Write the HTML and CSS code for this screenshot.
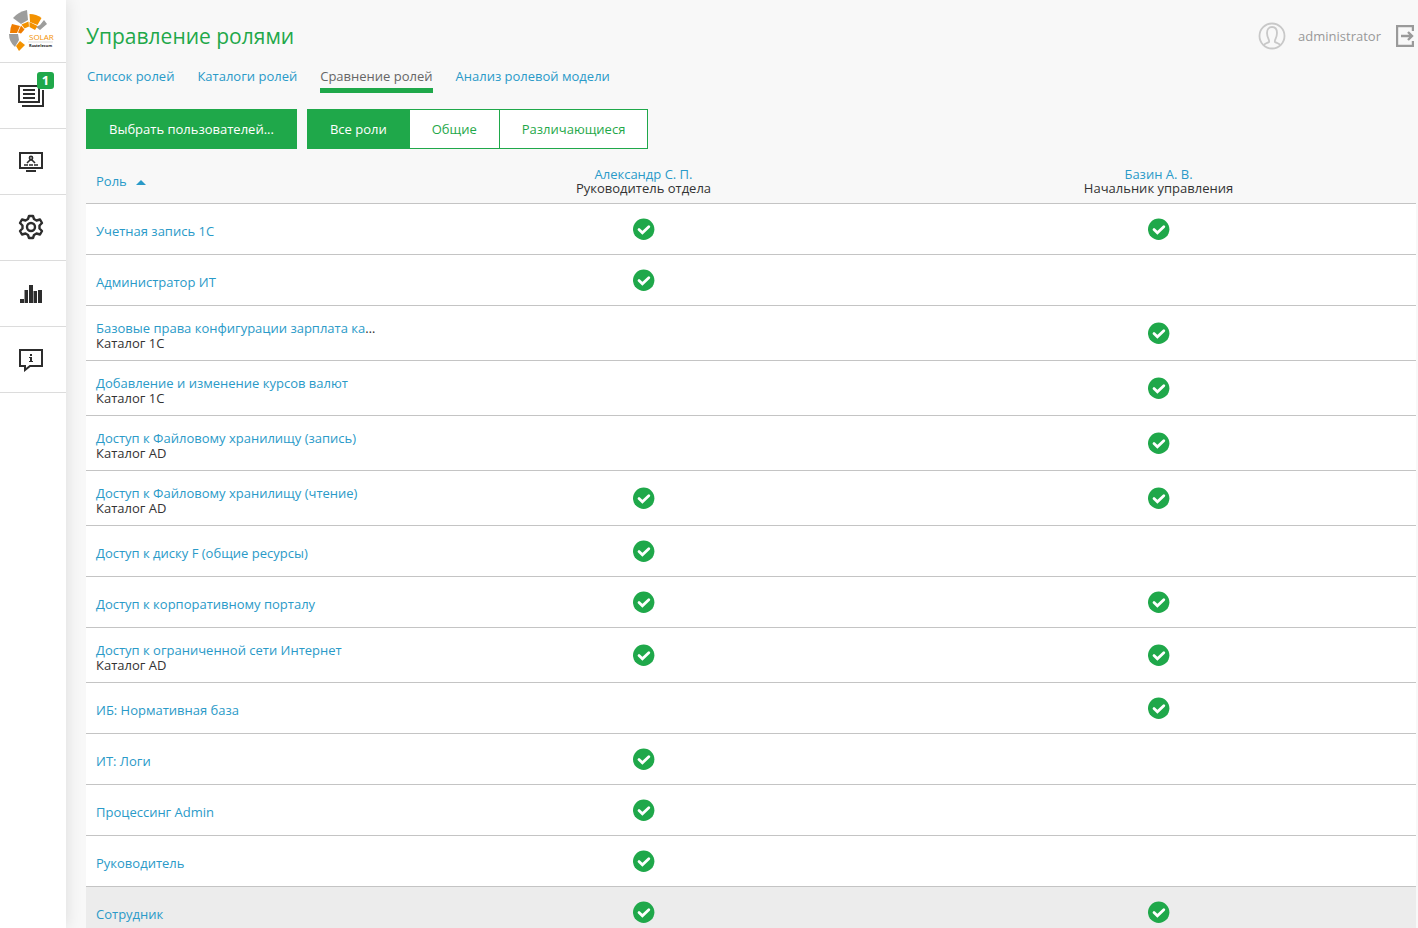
FILE: index.html
```html
<!DOCTYPE html>
<html lang="ru">

<head>
    <meta charset="utf-8">
    <title>Управление ролями</title>
    <meta name="viewport" content="width=device-width,initial-scale=1">
    <link rel="stylesheet" href="styles.css">
</head>

<body>
    <svg class="sprite" aria-hidden="true">
        <symbol id="check" viewBox="0 0 22 22">
            <circle cx="10.7" cy="11.3" r="10.7" fill="#1fa84a" />
            <path d="M6 11.600l3.400 3.200 6.400-6" fill="none" stroke="#fff" stroke-width="2.8" stroke-linecap="round" />
        </symbol>
    </svg>

    <div class="app">
        <nav class="sidebar">
            <a href="#" class="logo" aria-label="Solar Rostelecom">
                <svg viewBox="0 0 66 62" width="66" height="62">
                    <g fill="#9d9d9c">
                        <path d="M13 18q5-6 14-8l1 10-7 4z" />
                        <path d="M40 25l4-5 3 4-7 6-4-3z" />
                        <path d="M9 34h9l1 6-4 7q-6-5-6-13z" />
                    </g>
                    <g fill="#f39200">
                        <path d="M29.5 14q7 0 12 4l-4 7-7.500-3z" />
                        <path d="M21.500 24.500l7-3 .5 5-4.500 2z" />
                        <path d="M29.500 22l8 4-2.500 4-5.500-3z" />
                        <path d="M16 46l4-5 5 4-6 6z" />
                    </g>
                    <g fill="#ef7d00">
                        <path d="M12 24l8 2-3 7h-7q0-5 2-9z" />
                        <path d="M21 25.500l3.500 4-3.500 4-3-1z" />
                    </g>
                    <text x="29" y="40" font-size="8" fill="#f39200">SOLAR</text>
                    <path d="M28 42h25" stroke="#bbb" stroke-width=".5" />
                    <text x="29" y="47" font-size="4" font-weight="700" fill="#222">Rostelecom</text>
                </svg>
            </a>
            <a href="#" class="side-link" aria-label="Заявки">
                <svg viewBox="0 0 26 22" width="26" height="22" fill="none" stroke="#2d2d2d" stroke-width="2">
                    <path d="M1 1h20v16H1zM4 21h21V5M5 5h12M5 9h12M5 13h12" />
                </svg>
                <span class="badge">1</span>
            </a>
            <a href="#" class="side-link" aria-label="Рабочее место">
                <svg viewBox="0 0 26 22" width="26" height="22" fill="none" stroke="#2d2d2d" stroke-width="2">
                    <path d="M2 2h22v15H2zM8 20h10" />
                    <path d="M6 14h4M11 14h4M16 14h4M9 12l3-3h2l3 3" stroke-width="1.6" />
                    <circle cx="13" cy="7" r="1.6" stroke-width="1.6" />
                </svg>
            </a>
            <a href="#" class="side-link gear" aria-label="Настройки">
                <svg viewBox="0 0 26 26" width="26" height="26" fill="none" stroke="#2d2d2d" stroke-width="2.4" stroke-linejoin="round">
                    <path d="M11 2h4l1 3 2.500 1.500 3.500-1 2 3.500-2.500 2.500v3L24 17l-2 3.500-3.500-1L16 21l-1 3h-4l-1-3-2.500-1.500-3.500 1L2 17l2.500-2.500v-3L2 9l2-3.500 3.500 1L10 5z" />
                    <circle cx="13" cy="13" r="4" />
                </svg>
            </a>
            <a href="#" class="side-link" aria-label="Отчеты">
                <svg viewBox="0 0 22 18" width="22" height="18" fill="#2d2d2d">
                    <path d="M0 14h4v4H0zM4.500 5H8v13H4.500zM9 0h4v18H9zM13.500 6H17v12h-3.500zM18 5h4v13h-4z" />
                </svg>
            </a>
            <a href="#" class="side-link" aria-label="Справка">
                <svg viewBox="0 0 26 24" width="26" height="24" fill="none" stroke="#2d2d2d" stroke-width="2">
                    <path d="M2 2h22v16H12l-5 4v-4H2z" />
                    <path d="M12 6h2v2h-2zM11 9h3v4h1v1h-4v-1h1v-3h-1z" fill="#2d2d2d" stroke="none" />
                </svg>
            </a>
        </nav>

        <main class="content">
            <header class="header">
                <h1>Управление ролями</h1>
                <div class="user">
                    <svg viewBox="0 0 28 28" width="28" height="28" fill="none" stroke="#c8c8c8" stroke-width="1.8">
                        <circle cx="14" cy="14" r="12.5" />
                        <path d="M6 23c1-2 4-2 5-3 1-2-2-4-2-9 0-4 2-6 5-6s5 2 5 6c0 5-3 7-2 9 1 1 4 1 5 3" />
                    </svg>
                    <span class="user-name">administrator</span>
                    <a href="#" class="logout" aria-label="Выход">
                        <svg viewBox="0 0 18 22" width="18" height="22" fill="none" stroke="#9a9a9a" stroke-width="2.4">
                            <path d="M17 6V1H1v20h16v-5M5 11h11M12 7l4 4-4 4" />
                        </svg>
                    </a>
                </div>
            </header>

            <nav class="tabs">
                <a href="#">Список ролей</a>
                <a href="#">Каталоги ролей</a>
                <a href="#" class="active">Сравнение ролей</a>
                <a href="#">Анализ ролевой модели</a>
            </nav>

            <div class="toolbar">
                <button type="button" class="btn primary">Выбрать пользователей...</button>
                <div class="btn-group">
                    <button type="button" class="btn primary">Все роли</button>
                    <button type="button" class="btn">Общие</button>
                    <button type="button" class="btn">Различающиеся</button>
                </div>
            </div>

            <table class="roles">
                <thead>
                    <tr>
                        <th class="role"><a href="#" class="sort">Роль</a></th>
                        <th><a href="#">Александр С. П.</a><br>Руководитель отдела</th>
                        <th><a href="#">Базин А. В.</a><br>Начальник управления</th>
                    </tr>
                </thead>
                <tbody>
                    <tr>
                        <td class="role"><a href="#">Учетная запись 1С</a></td>
                        <td><svg class="check"><use href="#check" /></svg></td>
                        <td><svg class="check"><use href="#check" /></svg></td>
                    </tr>
                    <tr>
                        <td class="role"><a href="#">Администратор ИТ</a></td>
                        <td><svg class="check"><use href="#check" /></svg></td>
                        <td></td>
                    </tr>
                    <tr class="double">
                        <td class="role"><a href="#">Базовые права конфигурации зарплата кадры</a><br>Каталог 1С</td>
                        <td></td>
                        <td><svg class="check"><use href="#check" /></svg></td>
                    </tr>
                    <tr class="double">
                        <td class="role"><a href="#">Добавление и изменение курсов валют</a><br>Каталог 1С</td>
                        <td></td>
                        <td><svg class="check"><use href="#check" /></svg></td>
                    </tr>
                    <tr class="double">
                        <td class="role"><a href="#">Доступ к Файловому хранилищу (запись)</a><br>Каталог AD</td>
                        <td></td>
                        <td><svg class="check"><use href="#check" /></svg></td>
                    </tr>
                    <tr class="double">
                        <td class="role"><a href="#">Доступ к Файловому хранилищу (чтение)</a><br>Каталог AD</td>
                        <td><svg class="check"><use href="#check" /></svg></td>
                        <td><svg class="check"><use href="#check" /></svg></td>
                    </tr>
                    <tr>
                        <td class="role"><a href="#">Доступ к диску F (общие ресурсы)</a></td>
                        <td><svg class="check"><use href="#check" /></svg></td>
                        <td></td>
                    </tr>
                    <tr>
                        <td class="role"><a href="#">Доступ к корпоративному порталу</a></td>
                        <td><svg class="check"><use href="#check" /></svg></td>
                        <td><svg class="check"><use href="#check" /></svg></td>
                    </tr>
                    <tr class="double">
                        <td class="role"><a href="#">Доступ к ограниченной сети Интернет</a><br>Каталог AD</td>
                        <td><svg class="check"><use href="#check" /></svg></td>
                        <td><svg class="check"><use href="#check" /></svg></td>
                    </tr>
                    <tr>
                        <td class="role"><a href="#">ИБ: Нормативная база</a></td>
                        <td></td>
                        <td><svg class="check"><use href="#check" /></svg></td>
                    </tr>
                    <tr>
                        <td class="role"><a href="#">ИТ: Логи</a></td>
                        <td><svg class="check"><use href="#check" /></svg></td>
                        <td></td>
                    </tr>
                    <tr>
                        <td class="role"><a href="#">Процессинг Admin</a></td>
                        <td><svg class="check"><use href="#check" /></svg></td>
                        <td></td>
                    </tr>
                    <tr>
                        <td class="role"><a href="#">Руководитель</a></td>
                        <td><svg class="check"><use href="#check" /></svg></td>
                        <td></td>
                    </tr>
                    <tr class="hover">
                        <td class="role"><a href="#">Сотрудник</a></td>
                        <td><svg class="check"><use href="#check" /></svg></td>
                        <td><svg class="check"><use href="#check" /></svg></td>
                    </tr>
                </tbody>
            </table>
        </main>
    </div>
</body>

</html>
```
FILE: styles.css
```css
* {
    box-sizing: border-box;
}

body {
    margin: 0;
    font-family: "Open Sans", "Noto Sans", sans-serif;
    font-size: 13px;
    color: #333;
    background-color: #f8f8f8;
}

a {
    color: #2a9ac8;
    text-decoration: none;
}

.sprite {
    display: none;
}

.app {
    display: flex;
    height: 100vh;
    overflow: hidden;
}

/* Left icon menu */
.sidebar {
    flex: none;
    width: 66px;
    background-color: #fff;
    box-shadow: 0 0 16px rgba(0, 0, 0, 0.12);
}

.logo,
.side-link {
    display: flex;
    align-items: center;
    justify-content: center;
    border-bottom: 1px solid #dcdcdc;
}

.logo {
    height: 63px;
}

.side-link {
    position: relative;
    height: 66px;
    padding-right: 4px;
}

.gear {
    padding-bottom: 2px;
}

.badge {
    position: absolute;
    top: 9px;
    right: 12px;
    width: 17px;
    height: 17px;
    border-radius: 3px;
    background-color: #1fa84a;
    color: #fff;
    font-weight: 700;
    line-height: 17px;
    text-align: center;
}

.content {
    flex: 1;
    min-width: 0;
    padding: 0 2px 0 20px;
}

.header {
    display: flex;
    align-items: center;
    justify-content: space-between;
    height: 72px;
    padding-right: 2px;
}

h1 {
    margin: 0;
    font-size: 21px;
    font-weight: 400;
    color: #1fa84a;
}

.user {
    display: flex;
    align-items: center;
}

.user-name {
    margin: 0 15px 0 12px;
    color: #999;
}

.logout {
    display: flex;
}

.tabs {
    display: flex;
    gap: 23px;
    height: 21px;
    margin-top: -4px;
    padding-left: 1px;
    line-height: 16px;
}

.tabs .active {
    height: 25px;
    border-bottom: 5px solid #1fa84a;
    color: #666;
}

.toolbar {
    display: flex;
    gap: 10px;
    margin-top: 20px;
}

.btn-group {
    display: flex;
}

.btn {
    height: 40px;
    margin: 0;
    padding: 0 22px;
    border: 1px solid #1fa84a;
    background-color: #fff;
    color: #1fa84a;
    font: inherit;
}

.btn-group .btn + .btn {
    margin-left: -1px;
}

.btn.primary {
    background-color: #1fa84a;
    color: #fff;
    font-weight: 500;
}

/* Roles comparison */
.roles {
    width: 100%;
    margin-top: 10px;
    border-spacing: 0;
    table-layout: fixed;
}

.roles th,
.roles td {
    padding: 0;
    border-bottom: 1px solid #c4c4c4;
    text-align: center;
    vertical-align: middle;
}

.roles th {
    height: 45px;
    font-weight: 400;
    line-height: 14px;
}

.roles td {
    height: 51px;
    background-color: #fff;
    line-height: 15px;
}

.roles .double td {
    height: 55px;
}

.roles .hover td {
    background-color: #ececec;
}

.roles .role {
    width: 300px;
    padding: 0 10px;
    overflow: hidden;
    text-align: left;
    text-overflow: ellipsis;
    white-space: nowrap;
}

.roles td.role {
    padding-top: 4px;
}

.roles .double td.role {
    padding-top: 6px;
}

.sort::after {
    content: "";
    display: inline-block;
    margin: 0 0 1px 9px;
    border: 5px solid transparent;
    border-top: 0;
    border-bottom-color: #2a9ac8;
}

.check {
    display: block;
    width: 22px;
    height: 22px;
    margin: 0 auto;
}
```
